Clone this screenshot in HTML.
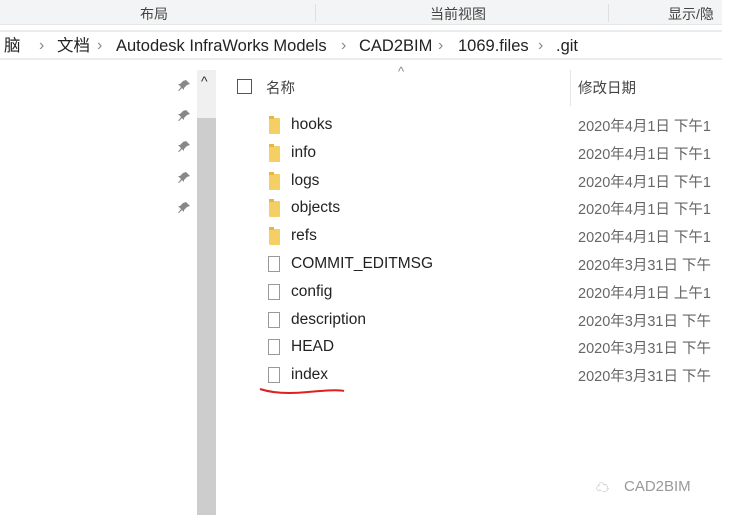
<!DOCTYPE html>
<html><head><style>
body{margin:0;width:751px;height:532px;background:#fff;position:relative;overflow:hidden;font-family:"Liberation Sans","Noto Sans CJK SC",sans-serif;color:#222}
.a{position:absolute;white-space:nowrap}
.tb{left:0;top:0;width:722px;height:24px;background:#f3f4f5;border-bottom:1px solid #e6e6e6}
.r{font-size:15.5px}
.d{font-size:14.5px;color:#666}
.bc{position:absolute;top:36px;height:20px;line-height:20px;font-size:16.5px;color:#222;white-space:nowrap}
.sp{position:absolute;top:36px;height:20px;line-height:20px;font-size:16px;color:#888}
.fold{position:absolute;width:11px;height:16px;background:#f4cf63;border-radius:1px}
.fold:before{content:"";position:absolute;left:0;top:-2px;width:5px;height:3px;background:#e6b640}
.file{position:absolute;width:12px;height:16px;border:1px solid #999;background:#fff;box-sizing:border-box}
</style></head><body>
<div class="a tb"></div>
<div class="a" style="left:140px;top:4px;font-size:14px;color:#444">布局</div>
<div class="a" style="left:430px;top:4px;font-size:14px;color:#444">当前视图</div>
<div class="a" style="left:668px;top:4px;font-size:14px;color:#444">显示/隐</div>
<div class="a" style="left:315px;top:4px;width:1px;height:18px;background:#e0e0e0"></div>
<div class="a" style="left:608px;top:4px;width:1px;height:18px;background:#e0e0e0"></div>
<div class="a" style="left:0;top:30px;width:722px;height:2px;background:#ececec"></div>
<div class="a" style="left:0;top:58px;width:722px;height:2px;background:#ececec"></div>
<div class="bc" style="left:4px">脑</div>
<div class="sp" style="left:39px">›</div>
<div class="bc" style="left:57px">文档</div>
<div class="sp" style="left:97px">›</div>
<div class="bc" style="left:116px">Autodesk InfraWorks Models</div>
<div class="sp" style="left:341px">›</div>
<div class="bc" style="left:359px">CAD2BIM</div>
<div class="sp" style="left:438px">›</div>
<div class="bc" style="left:458px">1069.files</div>
<div class="sp" style="left:538px">›</div>
<div class="bc" style="left:556px">.git</div>
<div class="a" style="left:197px;top:70px;width:19px;height:445px;background:#f0f0f0"></div>
<div class="a" style="left:197px;top:118px;width:19px;height:397px;background:#cdcdcd"></div>
<div class="a" style="left:201px;top:73px;font-size:14px;color:#333">^</div>
<svg class="a" style="left:176px;top:78px" width="16" height="140">
<g fill="#888"><path id="p" d="M10 2 L14 6 L11 7 L8 10 L8 12 L2 6 L4 6 L7 3 Z M5 9 L2 13 L3 13 L6 10Z"/></g>
<use href="#p" y="30" fill="#888"/><use href="#p" y="61" fill="#888"/><use href="#p" y="92" fill="#888"/><use href="#p" y="122" fill="#888"/>
</svg>
<div class="a" style="left:237px;top:79px;width:13px;height:13px;border:1px solid #555"></div>
<div class="a" style="left:266px;top:77px;font-size:14.5px;color:#444">名称</div>
<div class="a" style="left:398px;top:64px;font-size:13px;color:#888">^</div>
<div class="a" style="left:570px;top:70px;width:1px;height:36px;background:#e5e5e5"></div>
<div class="a" style="left:578px;top:77px;font-size:14.5px;color:#444">修改日期</div>

<div class="fold" style="left:269px;top:118px"></div><div class="a r" style="left:291px;top:116px">hooks</div><div class="a d" style="left:578px;top:115px">2020年4月1日 下午1</div>
<div class="fold" style="left:269px;top:146px"></div><div class="a r" style="left:291px;top:144px">info</div><div class="a d" style="left:578px;top:143px">2020年4月1日 下午1</div>
<div class="fold" style="left:269px;top:174px"></div><div class="a r" style="left:291px;top:172px">logs</div><div class="a d" style="left:578px;top:171px">2020年4月1日 下午1</div>
<div class="fold" style="left:269px;top:201px"></div><div class="a r" style="left:291px;top:199px">objects</div><div class="a d" style="left:578px;top:198px">2020年4月1日 下午1</div>
<div class="fold" style="left:269px;top:229px"></div><div class="a r" style="left:291px;top:227px">refs</div><div class="a d" style="left:578px;top:226px">2020年4月1日 下午1</div>
<div class="file" style="left:268px;top:256px"></div><div class="a r" style="left:291px;top:255px">COMMIT_EDITMSG</div><div class="a d" style="left:578px;top:254px">2020年3月31日 下午</div>
<div class="file" style="left:268px;top:284px"></div><div class="a r" style="left:291px;top:283px">config</div><div class="a d" style="left:578px;top:282px">2020年4月1日 上午1</div>
<div class="file" style="left:268px;top:312px"></div><div class="a r" style="left:291px;top:311px">description</div><div class="a d" style="left:578px;top:310px">2020年3月31日 下午</div>
<div class="file" style="left:268px;top:339px"></div><div class="a r" style="left:291px;top:338px">HEAD</div><div class="a d" style="left:578px;top:337px">2020年3月31日 下午</div>
<div class="file" style="left:268px;top:367px"></div><div class="a r" style="left:291px;top:366px">index</div><div class="a d" style="left:578px;top:365px">2020年3月31日 下午</div>
<svg class="a" style="left:258px;top:384px" width="90" height="14"><path d="M2 5 Q20 11 50 8 T86 7" stroke="#e02020" stroke-width="2" fill="none"/></svg>
<div class="a" style="left:596px;top:477px;font-size:13px;color:#aaa">☁</div>
<div class="a" style="left:624px;top:478px;font-size:15px;color:#999">CAD2BIM</div>
</body></html>
